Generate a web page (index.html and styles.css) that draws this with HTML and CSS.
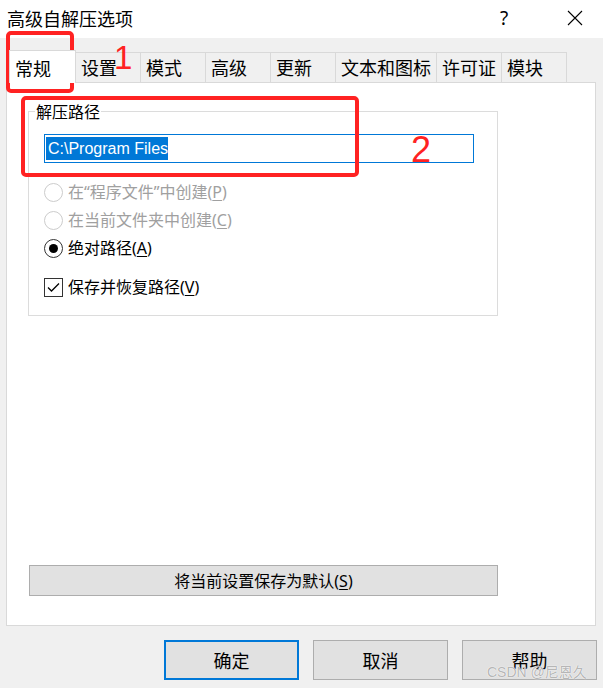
FILE: index.html
```html
<!DOCTYPE html>
<html lang="zh-CN">
<head>
<meta charset="utf-8">
<title>高级自解压选项</title>
<link rel="stylesheet" href="styles.css">
</head>
<body>
<div class="window">
  <header class="titlebar">
    <span class="title">高级自解压选项</span>
    <span class="help">?</span>
    <span class="close"><svg width="16" height="16" viewBox="0 0 16 16"><path d="M1 1L15 15M15 1L1 15" stroke="#000" stroke-width="1.1" fill="none"/></svg></span>
  </header>
  <div class="main">
    <nav class="tabs">
      <span class="tab active">常规</span>
      <span class="tab">设置</span>
      <span class="tab">模式</span>
      <span class="tab">高级</span>
      <span class="tab">更新</span>
      <span class="tab">文本和图标</span>
      <span class="tab">许可证</span>
      <span class="tab">模块</span>
    </nav>
    <section class="panel">
      <fieldset class="group">
        <legend>解压路径</legend>
        <div class="path-input"><span class="selected-text">C:\Program Files</span></div>
        <ul class="options">
          <li class="option disabled"><span class="radio"></span><span>在“程序文件”中创建(<u>P</u>)</span></li>
          <li class="option disabled"><span class="radio"></span><span>在当前文件夹中创建(<u>C</u>)</span></li>
          <li class="option"><span class="radio checked"></span><span>绝对路径(<u>A</u>)</span></li>
          <li class="option check-row"><span class="checkbox"><svg width="17" height="17" viewBox="0 0 17 17"><path d="M3 8.5L6.5 12L14 4.5" stroke="#000" stroke-width="1.3" fill="none"/></svg></span><span>保存并恢复路径(<u>V</u>)</span></li>
        </ul>
      </fieldset>
      <button class="wide-btn">将当前设置保存为默认(<u>S</u>)</button>
    </section>
    <div class="actions">
      <button class="btn default">确定</button>
      <button class="btn">取消</button>
      <button class="btn">帮助</button>
    </div>
  </div>
  <div class="mark mark-box1"></div>
  <div class="mark mark-box2"></div>
  <span class="mark-num num1">1</span>
  <span class="mark-num num2">2</span>
  <span class="watermark">CSDN @尼恩久</span>
</div>
</body>
</html>
```
FILE: styles.css
```css
* { box-sizing: border-box; }
html, body { margin: 0; padding: 0; }
body {
  width: 603px;
  height: 688px;
  overflow: hidden;
  background: #f0f0f0;
  font-family: "Noto Sans CJK SC", sans-serif;
  color: #000;
}
.window {
  position: relative;
  width: 603px;
  height: 688px;
  background: #f0f0f0;
}
.titlebar {
  height: 38px;
  background: #fff;
  display: flex;
  align-items: center;
  padding: 0 0 3px 7px;
  font-size: 18px;
}
.title { flex: 1; line-height: 24px; }
.help {
  font-family: "Noto Sans", sans-serif;
  font-size: 19px;
  line-height: 24px;
  width: 12px;
  margin-right: 55px;
}
.close { width: 16px; height: 16px; margin-right: 20px; display: flex; }
.main { padding: 12px 6px 0 6px; }
.tabs {
  display: flex;
  align-items: flex-end;
  height: 32px;
  padding-left: 3px;
}
.tab {
  height: 30px;
  min-width: 66px;
  padding: 0 5px;
  border: 1px solid #d9d9d9;
  border-bottom: 0;
  margin-left: -1px;
  font-size: 18px;
  line-height: 28px;
  white-space: nowrap;
  background: #f0f0f0;
}
.tab.active {
  height: 33px;
  min-width: 67px;
  margin-left: 0;
  margin-bottom: -1px;
  padding-top: 3px;
  background: #fff;
  position: relative;
  z-index: 1;
}
.panel {
  width: 590px;
  height: 544px;
  background: #fff;
  border: 1px solid #d9d9d9;
  display: flex;
  flex-direction: column;
  align-items: flex-start;
}
.group {
  margin: 16px 0 0 21px;
  padding: 0 0 14px 0;
  width: 470px;
  min-width: 0;
  border: 1px solid #dcdcdc;
  font-size: 16px;
}
.group legend {
  margin-left: 6px;
  padding: 0 1px;
  line-height: 24px;
  font-size: 16px;
}
.path-input {
  margin: 11px 0 0 15px;
  width: 430px;
  height: 29px;
  border: 1px solid #0078d7;
  padding: 2px 1px;
  display: flex;
}
.selected-text {
  background: #0078d7;
  color: #fff;
  font-family: "Liberation Sans", sans-serif;
  font-size: 16px;
  line-height: 23px;
  height: 23px;
  padding: 0 0 0 2px;
}
.options {
  list-style: none;
  margin: 15px 0 0 15px;
  padding: 0;
}
.option {
  display: flex;
  align-items: center;
  gap: 5px;
  height: 28px;
  font-family: "Noto Sans", "Noto Sans CJK SC", sans-serif;
  font-size: 16px;
  line-height: 24px;
}
.option.disabled { color: #a0a0a0; }
.check-row { margin-top: 11px; }
.radio {
  width: 19px;
  height: 19px;
  border: 1px solid #333;
  border-radius: 50%;
  display: flex;
  align-items: center;
  justify-content: center;
  flex: none;
}
.disabled .radio { border-color: #cccccc; }
.radio.checked::after {
  content: "";
  width: 9px;
  height: 9px;
  border-radius: 50%;
  background: #000;
}
.checkbox {
  width: 19px;
  height: 19px;
  border: 1px solid #333;
  display: flex;
  align-items: center;
  justify-content: center;
  flex: none;
}
u { text-underline-offset: 2px; }
.wide-btn {
  margin: auto 0 29px 22px;
  width: 469px;
  height: 31px;
  background: #e1e1e1;
  border: 1px solid #adadad;
  font-family: "Noto Sans", "Noto Sans CJK SC", sans-serif;
  font-size: 16px;
  color: #000;
  padding: 0;
  line-height: 24px;
}
.actions {
  display: flex;
  justify-content: flex-end;
  gap: 14px;
  margin-top: 14px;
}
.btn {
  width: 135px;
  height: 40px;
  background: #e1e1e1;
  border: 1px solid #adadad;
  font-family: inherit;
  font-size: 18px;
  color: #000;
  padding: 0;
}
.btn.default { border: 2px solid #0078d7; }
.mark {
  position: absolute;
  border: 4px solid #ff2222;
  border-radius: 5px;
}
.mark-box1 { left: 6px; top: 31px; width: 68px; height: 62px; }
.mark-box2 { left: 21px; top: 96px; width: 338px; height: 81px; }
.mark-num {
  position: absolute;
  color: #ff2222;
  font-family: "Liberation Sans", sans-serif;
  line-height: 1;
}
.num1 { left: 114px; top: 41px; font-size: 33px; }
.num2 { left: 411px; top: 132px; font-size: 36px; }
.watermark {
  position: absolute;
  left: 487px;
  top: 662px;
  white-space: nowrap;
  font-family: "Liberation Sans", "Noto Sans CJK SC", sans-serif;
  font-size: 14px;
  line-height: 20px;
  color: rgba(140, 140, 140, 0.65);
  text-shadow: 0 0 1px #fff, 0 0 1px #fff;
}
```
